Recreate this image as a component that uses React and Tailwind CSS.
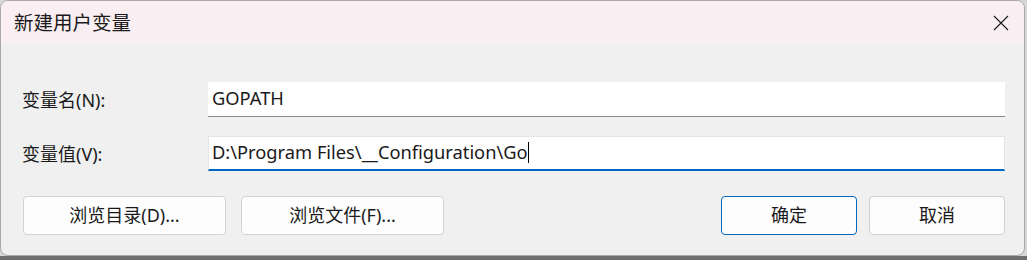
export default function App() {
  const font = { fontFamily: '"Segoe UI", "Noto Sans", "Noto Sans CJK SC", sans-serif' }

  return (
    <div className="w-[1027px] h-[260px] bg-[#d6d6d6] overflow-hidden flex flex-col" style={font}>
      <div className="w-[1025px] h-[256px] shrink-0 bg-[#f0f0f0] border border-[#a9a9a9] rounded-lg overflow-hidden flex flex-col text-[18px] text-[#1a1a1a]">
        {/* title bar */}
        <div className="h-[43px] bg-[#f9eff2] flex items-center justify-between pl-[13px] pr-[14px] shrink-0">
          <span className="text-[19.5px] leading-none">新建用户变量</span>
          <svg width="16" height="16" viewBox="0 0 16 16" className="mr-[1px]">
            <path d="M1 1 L15 15 M15 1 L1 15" stroke="#1a1a1a" strokeWidth="1.1" fill="none" />
          </svg>
        </div>

        {/* fields */}
        <div className="flex flex-col gap-[19px] pt-[38px] pl-[21px] pr-[19px]">
          <div className="flex items-center">
            <span className="w-[186px] shrink-0 pt-[2px]">变量名(N):</span>
            <div className="flex-1 h-[35px] bg-white border-b border-[#8a8a8a] flex items-center pl-[4px] pb-[3px] text-[18.3px]">
              GOPATH
            </div>
          </div>
          <div className="flex items-center">
            <span className="w-[186px] shrink-0 pt-[2px]">变量值(V):</span>
            <div className="flex-1 h-[35px] bg-white border border-[#e5e5e5] border-b-2 border-b-[#0067c0] flex items-center pl-[3px] pb-[2px] text-[18.3px]">
              <span>D:\Program Files\__Configuration\Go</span>
              <span className="w-[1px] h-[21px] bg-black" />
            </div>
          </div>
        </div>

        {/* buttons */}
        <div className="flex items-center pt-[25px] pl-[22px] pr-[19px]">
          <button className="w-[203px] h-[39px] bg-[#fdfdfd] border border-[#d3d3d3] rounded-[4px]">浏览目录(D)...</button>
          <button className="w-[203px] h-[39px] ml-[15px] bg-[#fdfdfd] border border-[#d3d3d3] rounded-[4px]">浏览文件(F)...</button>
          <div className="flex-1" />
          <button className="w-[136px] h-[39px] bg-[#fdfdfd] border border-[#0067c0] rounded-[4px]">确定</button>
          <button className="w-[136px] h-[39px] ml-[12px] bg-[#fdfdfd] border border-[#d0d0d0] rounded-[4px]">取消</button>
        </div>
      </div>
      <div className="flex-1 bg-[#6e6e6e]" />
    </div>
  )
}
